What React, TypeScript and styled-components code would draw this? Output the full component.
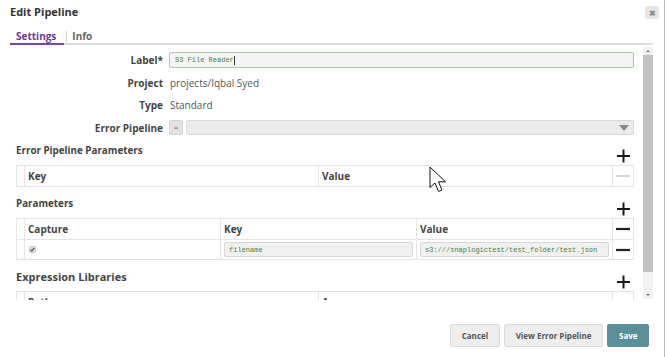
import React from "react";
import styled, { createGlobalStyle } from "styled-components";

const Global = createGlobalStyle`
  html, body { margin: 0; padding: 0; background: #fff; }
  body { font-family: "Open Sans", "Noto Sans", sans-serif; color: #444; }
  * { box-sizing: border-box; }
`;

const Dialog = styled.div`
  width: 665px;
  height: 357px;
  position: relative;
  background: #fff;
  border-right: 1px solid #b9b9b9;
  display: flex;
  flex-direction: column;
  overflow: hidden;
`;

const Header = styled.div`
  display: flex;
  justify-content: space-between;
  align-items: flex-start;
  padding: 4px 5px 0 10px;
  height: 19px;
`;

const Title = styled.h1`
  margin: 0;
  font-size: 11px;
  font-weight: 700;
  line-height: 15px;
  color: #333;
`;

const CloseButton = styled.div`
  width: 14px;
  height: 13px;
  margin-top: 2px;
  border-radius: 2px;
  background: #e6e6e6;
  color: #8a8a8a;
  font-size: 8px;
  font-weight: 700;
  display: flex;
  align-items: center;
  justify-content: center;
  line-height: 1;
`;

const TabBar = styled.div`
  margin: 10px 11px 0 10px;
  height: 16px;
  border-bottom: 2px solid #dedede;
  display: flex;
  align-items: flex-start;
`;

const Tab = styled.div<{ $active?: boolean }>`
  font-size: 10px;
  font-weight: 700;
  line-height: 14px;
  height: 16px;
  padding: ${(p) => (p.$active ? "0 8px 0 6px" : "0 4px 0 5px")};
  color: ${(p) => (p.$active ? "#6f3a98" : "#666")};
  border-bottom: 2px solid ${(p) => (p.$active ? "#7c44a8" : "transparent")};
`;

const TabSep = styled.span`
  width: 1px;
  height: 11px;
  margin: 2px 0 0 2px;
  background: #cfcfcf;
`;

const Body = styled.div`
  display: flex;
  margin: 1px 11px 0 10px;
  height: 254px;
`;

const ScrollArea = styled.div`
  flex: 1;
  overflow: hidden;
  padding: 2.75px 8px 0 6px;
`;

const Scrollbar = styled.div`
  width: 10px;
  margin: 1px 0 0 1px;
  height: 252px;
  background: #f1f1f1;
  display: flex;
  flex-direction: column;
  align-items: center;
`;

const ScrollArrow = styled.div<{ $down?: boolean }>`
  height: 8px;
  width: 100%;
  display: flex;
  align-items: center;
  justify-content: center;
  &::after {
    content: "";
    border-left: 2.5px solid transparent;
    border-right: 2.5px solid transparent;
    ${(p) =>
      p.$down ? "border-top: 2.5px solid #777;" : "border-bottom: 2.5px solid #777;"}
  }
`;

const ScrollThumb = styled.div`
  width: 100%;
  height: 217px;
  background: #c1c1c1;
`;

const ScrollSpacer = styled.div`
  flex: 1;
`;

const FormRow = styled.div`
  display: grid;
  grid-template-columns: 147px 1fr;
  column-gap: 6px;
  height: 22.5px;
  align-items: center;
`;

const FieldLabel = styled.div`
  text-align: right;
  font-size: 10px;
  font-weight: 700;
  color: #454545;
`;

const FieldValue = styled.div`
  font-size: 10px;
  color: #555;
  padding-left: 1px;
`;

const LabelInput = styled.div`
  height: 16px;
  border: 1.5px solid #a8ca9c;
  border-radius: 2px;
  background: #f4f4f4;
  font-family: "Liberation Mono", monospace;
  font-size: 7px;
  color: #4f7d3a;
  padding: 0 5px;
  display: flex;
  align-items: center;
`;

const Caret = styled.span`
  display: inline-block;
  width: 1px;
  height: 9px;
  background: #333;
`;

const SelectWrap = styled.div`
  display: flex;
  gap: 3px;
  align-items: center;
`;

const ExprToggle = styled.div`
  width: 14px;
  height: 15px;
  border: 1px solid #d3d3d3;
  border-radius: 2px;
  background: #e4e4e4;
  color: #999;
  font-size: 7px;
  font-weight: 700;
  display: flex;
  align-items: center;
  justify-content: center;
`;

const Select = styled.div`
  flex: 1;
  height: 15px;
  border: 1px solid #dadada;
  border-radius: 2px;
  background: #ececec;
  display: flex;
  align-items: center;
  justify-content: flex-end;
  padding-right: 4px;
  &::after {
    content: "";
    border-left: 5px solid transparent;
    border-right: 5px solid transparent;
    border-top: 6px solid #888;
  }
`;

const Section = styled.section<{ $first?: boolean }>`
  margin-top: ${(p) => (p.$first ? "5.25px" : "10px")};
`;

const SectionHead = styled.div`
  height: 21px;
  display: flex;
  justify-content: space-between;
  align-items: flex-start;
`;

const SectionTitle = styled.h2<{ $large?: boolean }>`
  margin: 0;
  font-size: ${(p) => (p.$large ? "11px" : "9.8px")};
  font-weight: 700;
  line-height: 14px;
  color: #444;
`;

const AddIcon = styled.svg`
  align-self: flex-end;
  margin: 0 3px 2px 0;
`;

const Table = styled.div`
  border: 1px solid #e4e4e4;
`;

const TRow = styled.div<{ $cols: string; $rule?: boolean }>`
  display: grid;
  grid-template-columns: ${(p) => p.$cols};
  height: 20px;
  border-top: ${(p) => (p.$rule ? "1px solid #e4e4e4" : "none")};
`;

const Cell = styled.div<{ $lead?: boolean; $center?: boolean }>`
  border-left: ${(p) => (p.$lead ? "none" : "1px solid #e4e4e4")};
  display: flex;
  align-items: center;
  justify-content: ${(p) => (p.$center ? "center" : "flex-start")};
  padding: 0 3px;
  min-width: 0;
`;

const HeadText = styled.span`
  font-size: 10px;
  font-weight: 700;
  color: #444;
`;

const CellInput = styled.div`
  flex: 1;
  height: 15px;
  border: 1px solid #d8d8d8;
  border-radius: 2px;
  background: #f0f0f0;
  font-family: "Liberation Mono", monospace;
  font-size: 7px;
  color: #4f7d3a;
  padding: 0 4px;
  display: flex;
  align-items: center;
  white-space: nowrap;
  overflow: hidden;
`;

const Check = styled.svg`
  margin-left: 1px;
`;

const Footer = styled.div`
  display: flex;
  justify-content: flex-end;
  gap: 4.5px;
  padding: 24px 15px 0 0;
`;

const Button = styled.div<{ $primary?: boolean }>`
  height: 23px;
  padding: 0 10.5px;
  border-radius: 2px;
  border: 1px solid ${(p) => (p.$primary ? "#5b8f9b" : "#dadada")};
  background: ${(p) => (p.$primary ? "#5b8f9b" : "#eeeeee")};
  color: ${(p) => (p.$primary ? "#fff" : "#555")};
  font-size: 8px;
  font-weight: 700;
  display: flex;
  align-items: center;
`;

const Pointer = styled.svg`
  position: absolute;
  left: 429px;
  top: 166px;
`;

const Plus = () => (
  <AddIcon width="15" height="14" viewBox="0 0 15 14">
    <path d="M7.5 0.5V13.5M1 7H14" stroke="#1a1a1a" strokeWidth="2" />
  </AddIcon>
);

const Minus = ({ muted }: { muted?: boolean }) => (
  <svg width="15" height="4" viewBox="0 0 15 4">
    <path d="M0 2H15" stroke={muted ? "#c9c9c9" : "#222"} strokeWidth={muted ? 1.6 : 2.4} />
  </svg>
);

const TWO = "7px 294px 1fr 21px";
const FOUR = "7px 196px 196px 1fr 21px";

export default function App() {
  return (
    <>
      <Global />
      <Dialog>
        <Header>
          <Title>Edit Pipeline</Title>
          <CloseButton>✖</CloseButton>
        </Header>
        <TabBar>
          <Tab $active>Settings</Tab>
          <TabSep />
          <Tab>Info</Tab>
        </TabBar>
        <Body>
          <ScrollArea>
            <FormRow>
              <FieldLabel>Label*</FieldLabel>
              <LabelInput>
                S3 File Reader
                <Caret />
              </LabelInput>
            </FormRow>
            <FormRow>
              <FieldLabel>Project</FieldLabel>
              <FieldValue>projects/Iqbal Syed</FieldValue>
            </FormRow>
            <FormRow>
              <FieldLabel>Type</FieldLabel>
              <FieldValue>Standard</FieldValue>
            </FormRow>
            <FormRow>
              <FieldLabel>Error Pipeline</FieldLabel>
              <SelectWrap>
                <ExprToggle>=</ExprToggle>
                <Select />
              </SelectWrap>
            </FormRow>

            <Section $first>
              <SectionHead>
                <SectionTitle>Error Pipeline Parameters</SectionTitle>
                <Plus />
              </SectionHead>
              <Table>
                <TRow $cols={TWO}>
                  <Cell $lead />
                  <Cell>
                    <HeadText>Key</HeadText>
                  </Cell>
                  <Cell>
                    <HeadText>Value</HeadText>
                  </Cell>
                  <Cell $center>
                    <Minus muted />
                  </Cell>
                </TRow>
              </Table>
            </Section>

            <Section>
              <SectionHead>
                <SectionTitle>Parameters</SectionTitle>
                <Plus />
              </SectionHead>
              <Table>
                <TRow $cols={FOUR}>
                  <Cell $lead />
                  <Cell>
                    <HeadText>Capture</HeadText>
                  </Cell>
                  <Cell>
                    <HeadText>Key</HeadText>
                  </Cell>
                  <Cell>
                    <HeadText>Value</HeadText>
                  </Cell>
                  <Cell $center>
                    <Minus />
                  </Cell>
                </TRow>
                <TRow $cols={FOUR} $rule>
                  <Cell $lead />
                  <Cell>
                    <Check width="7" height="7" viewBox="0 0 7 7">
                      <rect x="0.5" y="0.5" width="6" height="6" rx="1" fill="#e2e2e2" stroke="#bdbdbd" strokeWidth="0.8" />
                      <path d="M1.6 3.6L2.9 4.9L5.4 1.9" stroke="#444" strokeWidth="1.1" fill="none" />
                    </Check>
                  </Cell>
                  <Cell>
                    <CellInput>filename</CellInput>
                  </Cell>
                  <Cell>
                    <CellInput>s3:///snaplogictest/test_folder/test.json</CellInput>
                  </Cell>
                  <Cell $center>
                    <Minus />
                  </Cell>
                </TRow>
              </Table>
            </Section>

            <Section>
              <SectionHead>
                <SectionTitle $large>Expression Libraries</SectionTitle>
                <Plus />
              </SectionHead>
              <Table>
                <TRow $cols={TWO}>
                  <Cell $lead />
                  <Cell>
                    <HeadText>Path</HeadText>
                  </Cell>
                  <Cell>
                    <HeadText>As</HeadText>
                  </Cell>
                  <Cell $center>
                    <Minus muted />
                  </Cell>
                </TRow>
              </Table>
            </Section>
          </ScrollArea>
          <Scrollbar>
            <ScrollArrow />
            <ScrollThumb />
            <ScrollSpacer />
            <ScrollArrow $down />
          </Scrollbar>
        </Body>
        <Footer>
          <Button>Cancel</Button>
          <Button>View Error Pipeline</Button>
          <Button $primary>Save</Button>
        </Footer>
        <Pointer width="20" height="28" viewBox="0 0 20 28">
          <path
            d="M1 1 L1 21.5 L6 17 L9.6 25.5 L13 24 L9.5 15.8 L16.5 15.8 Z"
            fill="#fff"
            stroke="#111"
            strokeWidth="1"
            strokeLinejoin="round"
          />
        </Pointer>
      </Dialog>
    </>
  );
}
